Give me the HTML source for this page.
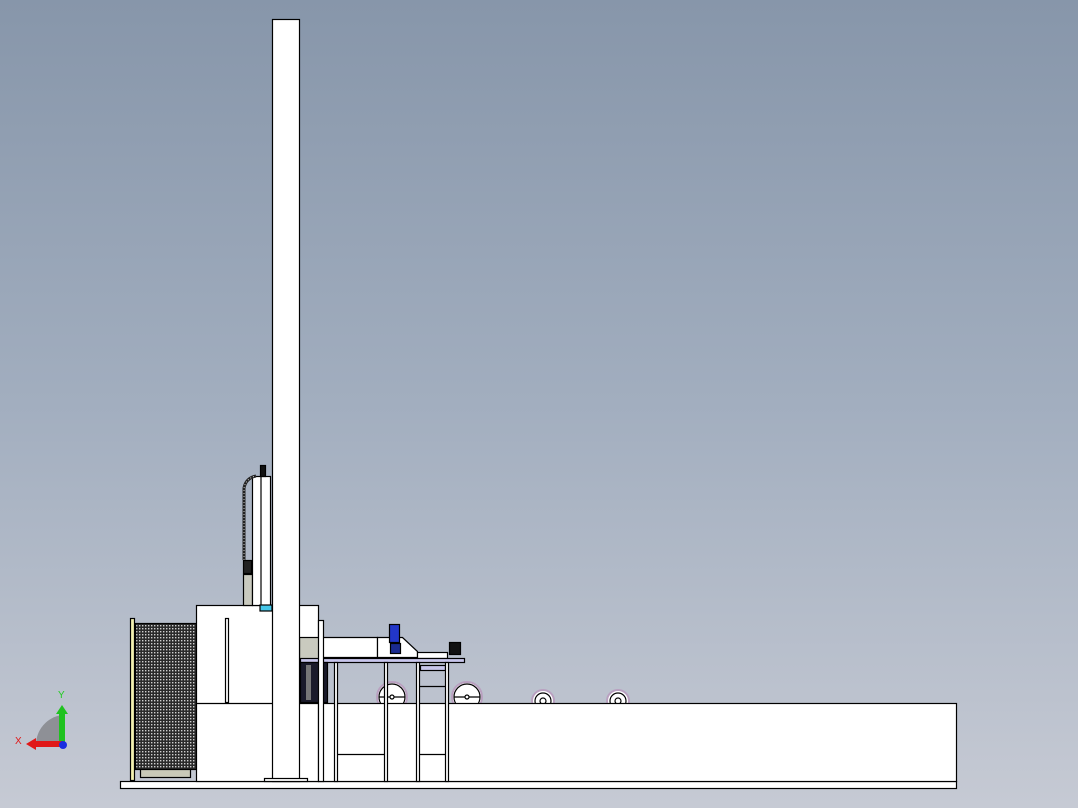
<!DOCTYPE html>
<html><head><meta charset="utf-8"><style>
html,body{margin:0;padding:0;width:1078px;height:808px;overflow:hidden}
svg{display:block}
text{font-family:"Liberation Sans",sans-serif}
</style></head><body>
<svg width="1078" height="808" viewBox="0 0 1078 808" xmlns="http://www.w3.org/2000/svg">
<defs>
<linearGradient id="bg" x1="0" y1="0" x2="0" y2="1">
<stop offset="0" stop-color="#8796aa"/>
<stop offset="0.5" stop-color="#a2aebf"/>
<stop offset="1" stop-color="#c6cad4"/>
</linearGradient>
<pattern id="mesh" width="3" height="3" patternUnits="userSpaceOnUse">
<rect width="3" height="3" fill="#2a2a2a"/><rect x="1" y="1" width="1.4" height="1.4" fill="#cfcfcf"/>
</pattern>
</defs>
<rect width="1078" height="808" fill="url(#bg)"/>
<g stroke="#000" stroke-width="1.2" fill="#fff">
<g fill="#fff" stroke="#000">
<circle cx="392" cy="697" r="15" stroke="#b9a0c0" stroke-width="2"/>
<circle cx="392" cy="697" r="13"/>
<line x1="379" y1="697" x2="405" y2="697"/><circle cx="392" cy="697" r="2"/>
<circle cx="467" cy="697" r="15" stroke="#b9a0c0" stroke-width="2"/>
<circle cx="467" cy="697" r="13"/>
<line x1="454" y1="697" x2="480" y2="697"/><circle cx="467" cy="697" r="2"/>
<circle cx="543" cy="701" r="11" stroke="#b9a0c0" stroke-width="2"/>
<circle cx="543" cy="701" r="8"/><circle cx="543" cy="701" r="3"/>
<circle cx="618" cy="701" r="11" stroke="#b9a0c0" stroke-width="2"/>
<circle cx="618" cy="701" r="8"/><circle cx="618" cy="701" r="3"/>
</g>
<rect x="120.5" y="781.5" width="836" height="7"/>
<rect x="318.5" y="703.5" width="638" height="78"/>
<rect x="135.5" y="623.5" width="61" height="146" fill="url(#mesh)"/>
<rect x="140.5" y="769.5" width="50" height="8" fill="#c9c9b8"/>
<rect x="130.5" y="618.5" width="4" height="162" fill="#f2f0b0"/>
<rect x="196.5" y="605.5" width="122" height="176"/>
<line x1="196" y1="703.5" x2="318" y2="703.5"/>
<rect x="225.5" y="618.5" width="3" height="84"/>
<rect x="243.5" y="574.5" width="9" height="31" fill="#c9cabf"/>
<rect x="252.5" y="476.5" width="18" height="129"/>
<line x1="261" y1="476" x2="261" y2="605"/>
<rect x="260.5" y="465.5" width="5" height="11" fill="#111"/>
<path d="M244 560 L244 488 Q246 478 256 476" fill="none" stroke="#222" stroke-width="3"/>
<path d="M244 560 L244 488 Q246 478 256 476" fill="none" stroke="#ccc" stroke-width="1" stroke-dasharray="1 2"/>
<rect x="243.5" y="560.5" width="8" height="13" fill="#222"/>
<rect x="260" y="605" width="12" height="6" fill="#45c6e8"/>
<rect x="299.5" y="637.5" width="24" height="22" fill="#c9cabf"/>
<path d="M321.5 637.5 L377.5 637.5 L377.5 657.5 L321.5 657.5Z"/>
<path d="M377.5 637.5 L402.5 637.5 L417.5 651.5 L417.5 657.5 L377.5 657.5Z"/>
<rect x="417.5" y="652.5" width="30" height="6"/>
<rect x="300.5" y="658.5" width="164" height="4" fill="#c8c6ec"/>
<rect x="300.5" y="662.5" width="27" height="40" fill="#1a1a2a"/>
<rect x="306" y="665" width="5" height="35" fill="#777" stroke="none"/>
<rect x="420.5" y="665.5" width="25" height="5" fill="#c8c6ec"/>
<rect x="389.5" y="624.5" width="10" height="18" fill="#2236c8"/>
<rect x="390.5" y="643.5" width="10" height="10" fill="#1a2a90"/>
<rect x="449.5" y="642.5" width="11" height="12" fill="#111"/>
<rect x="318.5" y="620.5" width="5" height="161"/>
<rect x="334.5" y="662.5" width="3" height="119"/>
<rect x="384.5" y="662.5" width="3" height="119"/>
<rect x="416.5" y="662.5" width="3" height="119"/>
<rect x="445.5" y="662.5" width="3" height="119"/>
<line x1="337" y1="754.5" x2="384" y2="754.5"/>
<line x1="419" y1="754.5" x2="445" y2="754.5"/>
<line x1="419" y1="686.5" x2="445" y2="686.5"/>
<rect x="272.5" y="19.5" width="27" height="762"/>
<rect x="264.5" y="778.5" width="43" height="3"/>
</g>
<path d="M62 745 L62 715 A30 30 0 0 0 36 745Z" fill="#8e9096"/>
<rect x="59" y="712" width="6" height="32" fill="#1fc21f"/>
<path d="M56 714 L62 705 L68 714Z" fill="#1fc21f"/>
<rect x="34" y="741" width="29" height="6" fill="#e01818"/>
<path d="M36 738 L26 744 L36 750Z" fill="#e01818"/>
<circle cx="63" cy="745" r="4" fill="#1a2ee0"/>
<text x="58" y="698" font-size="10" fill="#22cc22">Y</text>
<text x="15" y="744" font-size="10" fill="#e01818">X</text>
</svg>
</body></html>
